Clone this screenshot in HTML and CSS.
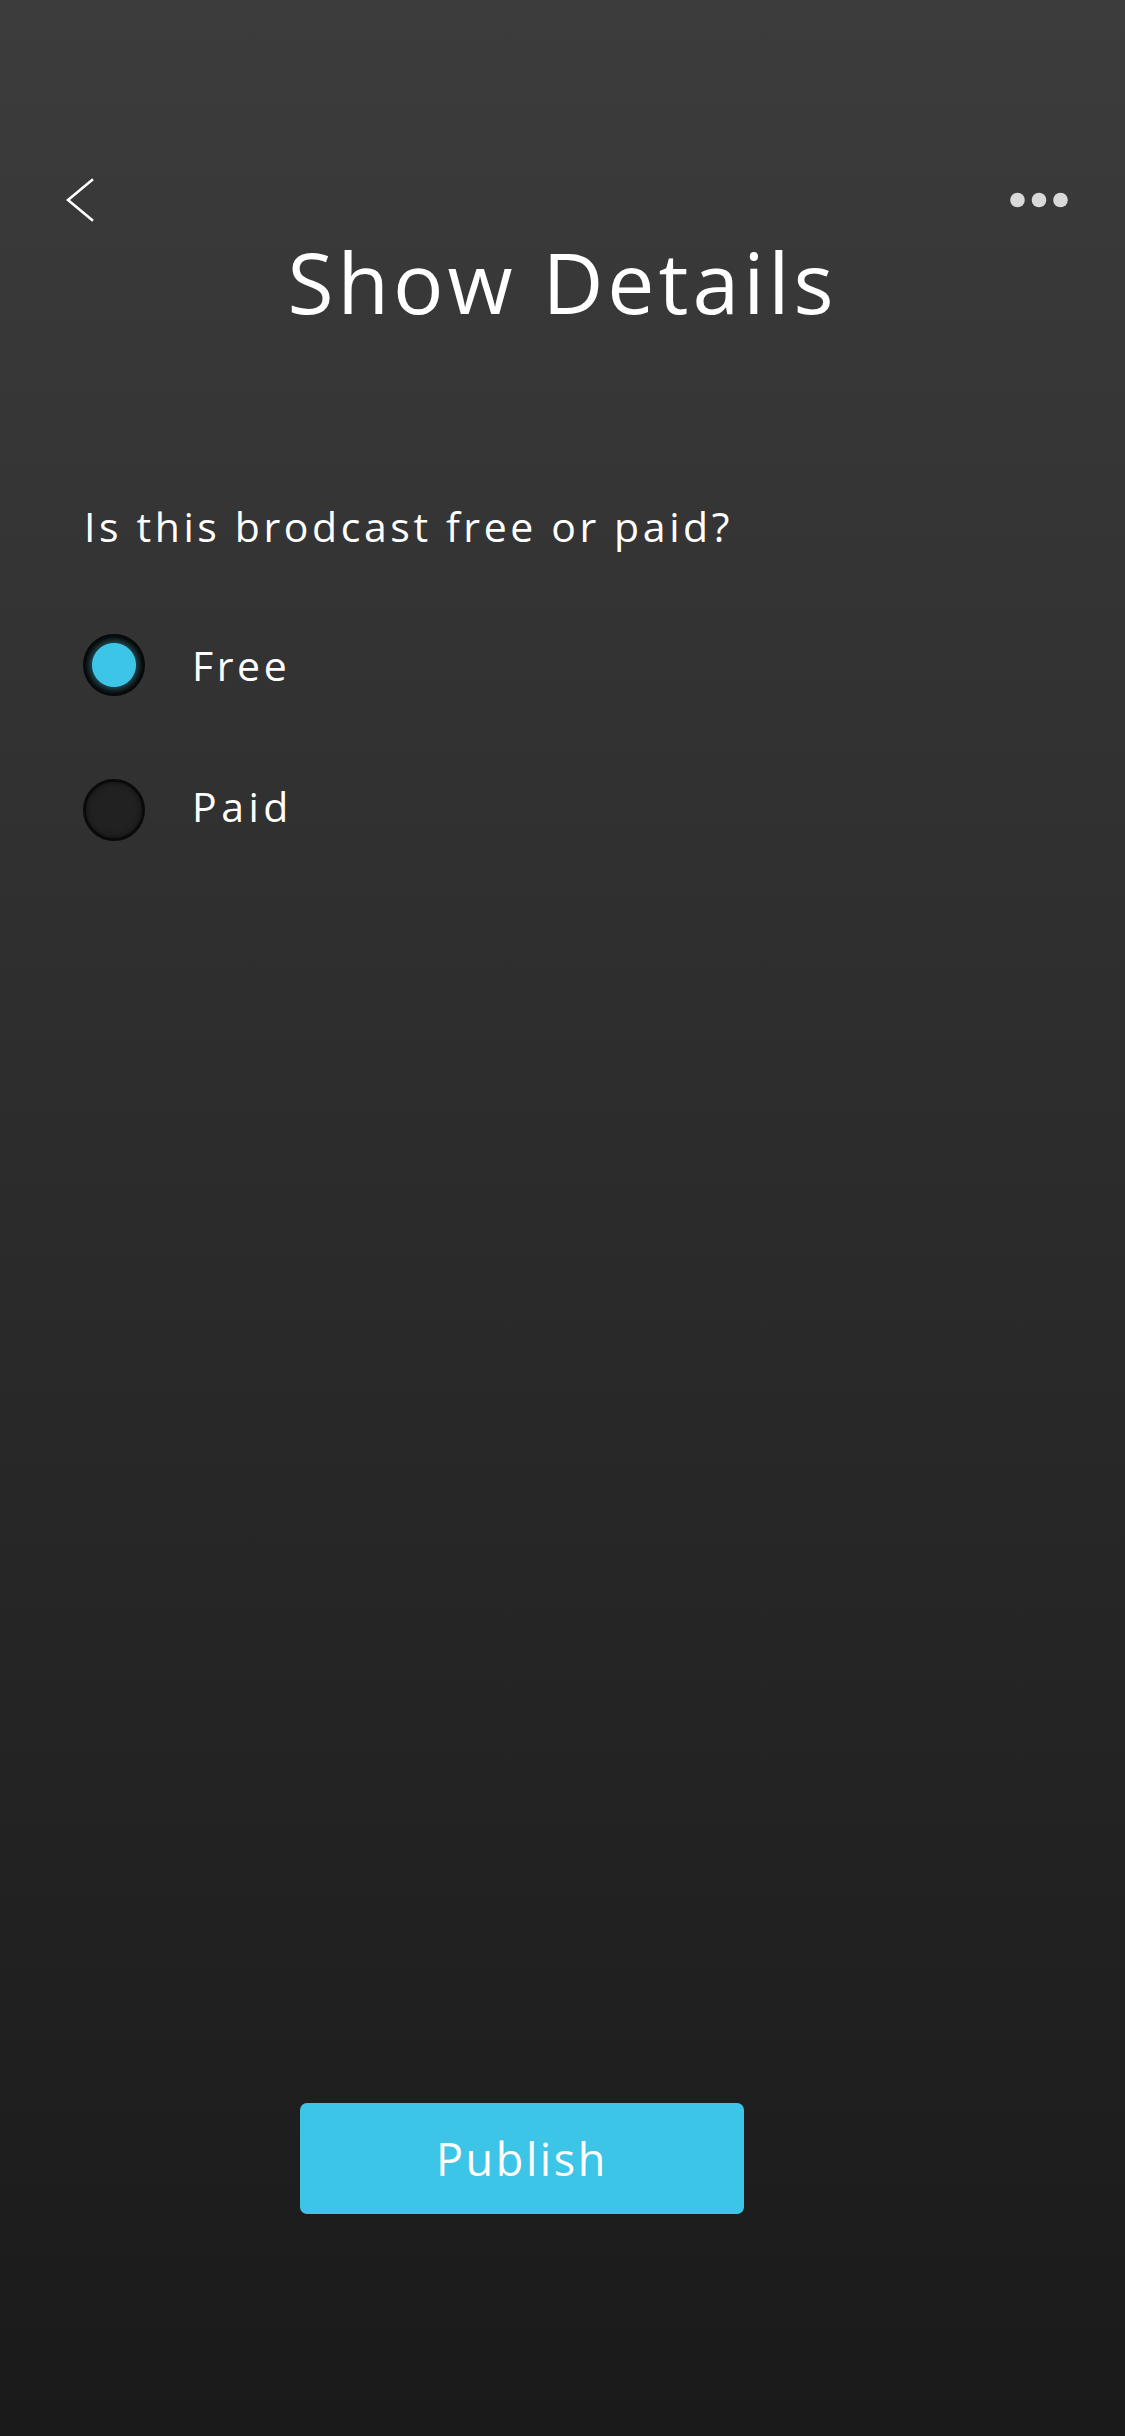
FILE: index.html
```
<!DOCTYPE html>
<html lang="en">
<head>
<meta charset="utf-8">
<title>Show Details</title>
<link rel="stylesheet" href="styles.css">
</head>
<body>
<div class="page">
  <header class="topbar">
    <button class="icon-btn back" aria-label="Back">
      <svg width="28" height="44" viewBox="0 0 28 44"><polyline points="26,2 2,22 26,42" fill="none" stroke="#ffffff" stroke-width="2.6" stroke-linecap="square"/></svg>
    </button>
    <button class="icon-btn more" aria-label="More">
      <svg width="58" height="16" viewBox="0 0 58 16"><circle cx="7.5" cy="8" r="7.3" fill="#d9d9d9"/><circle cx="29" cy="8" r="7.3" fill="#d9d9d9"/><circle cx="50.5" cy="8" r="7.3" fill="#d9d9d9"/></svg>
    </button>
  </header>
  <h1 class="title">Show Details</h1>
  <main class="content">
    <p class="question">Is this brodcast free or paid?</p>
    <div class="options">
      <label class="option">
        <span class="radio radio-on"></span>
        <span class="option-label option-label-free">Free</span>
      </label>
      <label class="option">
        <span class="radio"></span>
        <span class="option-label option-label-up">Paid</span>
      </label>
    </div>
  </main>
  <div class="actions">
    <button class="publish">Publish</button>
  </div>
</div>
</body>
</html>
```
FILE: styles.css
```
* { box-sizing: border-box; }
html, body { margin: 0; padding: 0; }
body {
  width: 1125px;
  height: 2436px;
  background: linear-gradient(180deg, #3c3c3c 0%, #2b2b2b 50%, #1a1a1a 100%);
  font-family: "Open Sans", "Liberation Sans", sans-serif;
  color: #ffffff;
  overflow: hidden;
}
.page {
  height: 2436px;
  display: flex;
  flex-direction: column;
}
.topbar {
  display: flex;
  justify-content: space-between;
  align-items: center;
  height: 44px;
  margin-top: 178px;
  padding: 0 57px 0 66px;
}
.icon-btn {
  background: none;
  border: 0;
  padding: 0;
  display: flex;
}
.title {
  margin: 18px 0 0;
  font-weight: 400;
  font-size: 84px;
  line-height: 84px;
  text-align: center;
  letter-spacing: 4px;
}
.content {
  padding: 0 84px;
}
.question {
  margin: 182px 0 0;
  font-size: 41px;
  line-height: 41px;
  letter-spacing: 3.6px;
}
.options {
  margin-top: 87px;
  margin-left: -1px;
  display: flex;
  flex-direction: column;
  gap: 83px;
}
.option {
  display: flex;
  align-items: center;
  gap: 47px;
  height: 62px;
}
.radio {
  width: 62px;
  height: 62px;
  border-radius: 50%;
  flex: none;
  background: #212121;
  border: 3px solid #0a0a0a;
  box-shadow: inset 0 0 6px rgba(0,0,0,0.5);
}
.radio-on {
  border: 0;
  background: radial-gradient(circle, #3cc5e7 0 21.5px, #1f3d45 22.5px, #122125 26px, #0b1113 28px, #070909 31px);
}
.option-label {
  font-size: 41px;
  line-height: 41px;
  letter-spacing: 4.5px;
}
.option-label-free {
  letter-spacing: 3.6px;
}
.option-label-up {
  margin-top: -4px;
  margin-bottom: 4px;
}
.actions {
  margin-top: auto;
  padding: 0 0 222px 300px;
}
.publish {
  width: 444px;
  height: 111px;
  border: 0;
  border-radius: 7px;
  background: #3cc5e7;
  color: #ffffff;
  font-family: "Open Sans", "Liberation Sans", sans-serif;
  font-size: 45px;
  letter-spacing: 2.6px;
  padding: 0;
}
```
